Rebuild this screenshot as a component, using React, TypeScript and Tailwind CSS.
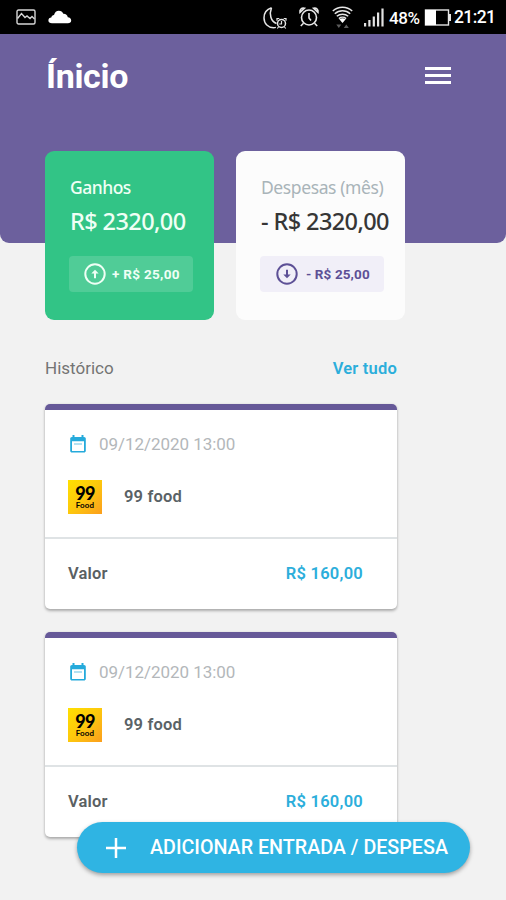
import type { FC, ReactNode } from "react"

type TEntry = {
  id: number
  date: string
  name: string
  value: string
}

const entries: TEntry[] = [
  { id: 1, date: "09/12/2020 13:00", name: "99 food", value: "R$ 160,00" },
  { id: 2, date: "09/12/2020 13:00", name: "99 food", value: "R$ 160,00" },
]

const StatusBar: FC = () => {
  return (
    <div className="flex h-[34px] items-center justify-between bg-black pr-[11px] pl-4 text-white">
      <div className="flex items-center gap-[12px]">
        <svg width="20" height="16" viewBox="0 0 20 16" fill="none" stroke="#d6d6d6" strokeWidth="1.4">
          <rect x="1" y="1" width="18" height="14" rx="1.5" />
          <path d="M1.500 9.500L5.500 4.500l3.500 4 2-1.500 3 2.500 2-2 2.500 2.500" />
        </svg>
        <svg width="24" height="14" viewBox="0 0 24 14" fill="#fff">
          <path d="M4 13.200C1.800 13.200.4 12.100.4 10.400c0-1.600 1.200-2.600 2.900-2.800C3.600 5.700 4.600 4.900 6 4.900 6.800 2.400 8.400.8 10.800.8c2.300 0 3.700 1.100 4.500 3 2.500-.1 4.100 1.200 4.500 3.500 2.100.2 3.400 1.300 3.400 3.100 0 1.800-1.300 2.800-3.300 2.800z" />
        </svg>
      </div>

      <div className="flex items-center">
        {/* Do not disturb with schedule */}
        <svg className="mt-px" width="25" height="24" viewBox="0 0 25 24" fill="none" stroke="#e6e6e6" strokeWidth="1.500">
          <path d="M8.500 1.800C3.800 3.300 1 7 1 12c0 5.600 4.200 9.700 9.700 9.700.8 0 1.500-.1 2.200-.3M8.500 1.800C6 8.200 7.700 15.500 13.500 17.500" />
          <circle cx="18.500" cy="17.500" r="4" />
          <path d="M18.500 15v3h-2.300M14 14.800v-2.300h2.300M23 14.800v-2.300h-2.300M15.500 21l-1.200 1.500M21.500 21l1.200 1.500" strokeWidth="1.200" />
        </svg>

        {/* Alarm */}
        <svg className="ml-[10px]" width="22" height="22" viewBox="0 0 22 22" fill="none" stroke="#e6e6e6" strokeWidth="1.600">
          <circle cx="11" cy="11.500" r="7.500" />
          <path d="M11 7v5l2 2.500M2 6.500C1.500 3.500 3.500 1.500 6.500 2.200zM20 6.500C20.500 3.500 18.500 1.500 15.500 2.200zM5.500 17.200L2.800 20M16.500 17.200l2.700 2.800" />
        </svg>

        {/* Wifi */}
        <svg className="ml-[12px]" width="21" height="22" viewBox="0 0 21 22" fill="none" stroke="#e6e6e6" strokeWidth="1.500">
          <path d="M.8 5C6.200 0 14.800 0 20.200 5M2.800 7.700c4.400-4 11-4 15.400 0M4.800 10.300c3.200-2.900 8.200-2.900 11.400 0M6.900 12.600c2-1.700 5.200-1.700 7.200 0" />
          <path d="M7.300 13.300c2-1.300 4.400-1.300 6.400 0L10.500 17z" fill="#fff" stroke="none" />
          <path d="M4.300 18.500h5L6.800 22zM11.800 22h5L14.300 18.500z" fill="#5c5c5c" stroke="none" />
        </svg>

        {/* Signal */}
        <svg className="ml-[11px]" width="21" height="19" viewBox="0 0 21 19" fill="#e2e2e2">
          <rect x="0" y="15" width="2.200" height="3.500" />
          <rect x="4.300" y="12" width="2.200" height="6.500" />
          <rect x="8.700" y="8.500" width="2.200" height="10" />
          <rect x="13" y="4.500" width="2.200" height="14" />
          <rect x="17.400" y="0.500" width="2.200" height="18" />
        </svg>

        <span className="ml-[4px] w-[34px] pt-[2px] text-[17px] leading-none font-medium tracking-[-0.4px] whitespace-nowrap">48%</span>

        {/* Battery */}
        <svg className="ml-[1px]" width="27" height="17" viewBox="0 0 27 17">
          <rect x="1.500" y="1" width="23" height="15" fill="none" stroke="#e6e6e6" strokeWidth="1.400" />
          <rect x="1" y="1" width="11" height="15" fill="#fff" />
          <rect x="25" y="5" width="2" height="7" fill="#e6e6e6" />
        </svg>

        <span className="ml-[3px] w-[41px] pt-[2px] text-[17.500px] leading-none font-medium tracking-[-0.6px] whitespace-nowrap">21:21</span>
      </div>
    </div>
  )
}

const Header: FC = () => {
  return (
    <header className="flex h-[209px] items-start justify-between rounded-b-[9px] bg-[#6c609d] pr-[55px] pl-[46px]">
      <h1 className="mt-[20px] text-[34px] leading-[44px] font-bold tracking-[-0.3px] text-white">Ínicio</h1>
      <button className="mt-[33px] flex w-[26px] flex-col gap-[4px]" aria-label="Menu">
        <span className="h-[3px] bg-white" />
        <span className="h-[3px] bg-white" />
        <span className="h-[3px] bg-white" />
      </button>
    </header>
  )
}

type TSummaryCard = {
  title: string
  value: string
  delta: string
  icon: ReactNode
  className: string
  titleClass: string
  badgeClass: string
}

const SummaryCard: FC<TSummaryCard> = ({ title, value, delta, icon, className, titleClass, badgeClass }) => {
  return (
    <div className={`h-[169px] w-[169px] rounded-[9px] pt-[24px] pl-[24px] ${className}`}>
      <p className={`pl-px font-['Noto_Sans',sans-serif] text-[17.500px] leading-[24px] whitespace-nowrap ${titleClass}`}>{title}</p>
      <p className="mt-[6px] pl-px font-['Noto_Sans',sans-serif] text-[23.500px] leading-[32px] font-medium tracking-[-0.6px] whitespace-nowrap">
        {value}
      </p>
      <div className={`mt-[19px] flex h-[36px] w-[124px] items-center rounded-[4px] text-[13.500px] font-bold whitespace-nowrap ${badgeClass}`}>
        {icon}
        {delta}
      </div>
    </div>
  )
}

const ArrowUp: FC = () => (
  <svg className="mr-[6px]" width="22" height="22" viewBox="0 0 22 22" fill="none" stroke="currentColor" strokeWidth="2">
    <circle cx="11" cy="11" r="9.700" />
    <path d="M11 15.200V9" />
    <path d="M7.300 10.500L11 6.800l3.700 3.700z" fill="currentColor" stroke="none" />
  </svg>
)

const ArrowDown: FC = () => (
  <svg className="mr-[8px]" width="22" height="22" viewBox="0 0 22 22" fill="none" stroke="currentColor" strokeWidth="2">
    <circle cx="11" cy="11" r="9.700" />
    <path d="M11 6.800V13" />
    <path d="M7.300 11.500l3.700 3.700 3.700-3.700z" fill="currentColor" stroke="none" />
  </svg>
)

const CalendarIcon: FC = () => (
  <svg width="16" height="18" viewBox="0 0 16 18" fill="#25aadb">
    <path d="M2.500 0h2v2h7V0h2v2H14c1.100 0 1.800.8 1.800 1.800v12c0 1.100-.8 1.800-1.800 1.800H2C.9 17.600.2 16.800.2 15.800v-12C.2 2.800.9 2 2 2h.5zM2 6.200v9.700h12V6.200z" />
    <rect x="4" y="8" width="8" height="2" opacity=".35" />
  </svg>
)

const FoodLogo: FC = () => (
  <div className="flex h-[34px] w-[34px] flex-col items-center bg-linear-to-br from-[#ffe000] via-[#fdc80c] to-[#fb9e1c] pt-[5px] text-black">
    <span className="font-['Lato',sans-serif] text-[18px] leading-[16px] font-black tracking-[-0.6px]">99</span>
    <span className="font-['Lato',sans-serif] text-[8px] leading-[8px] font-bold tracking-[0.2px]">Food</span>
  </div>
)

const EntryCard: FC<{ entry: TEntry }> = ({ entry }) => {
  return (
    <div className="h-[205px] overflow-hidden rounded-[5px] bg-white shadow-[0_2px_3px_rgba(0,0,0,0.28),0_0_3px_rgba(0,0,0,0.08)]">
      <div className="h-[6px] bg-[#665998]" />
      <div className="h-[129px] border-b-2 border-[#dfe3e5] px-[23px] pt-[22px]">
        <div className="flex items-center gap-[13px] pl-[2px]">
          <CalendarIcon />
          <span className="text-[17px] leading-[24px] tracking-[-0.05px] whitespace-nowrap text-[#b3b7ba]">{entry.date}</span>
        </div>
        <div className="mt-[24px] flex items-center">
          <FoodLogo />
          <span className="ml-[22px] text-[16.500px] font-semibold tracking-[0.15px] text-[#5a6266]">{entry.name}</span>
        </div>
      </div>
      <div className="flex h-[71px] items-center justify-between pr-[34px] pl-[23px] text-[16.500px] font-semibold">
        <span className="tracking-[0.15px] text-[#5a6062]">Valor</span>
        <span className="tracking-[0.25px] text-[#2caedb]">{entry.value}</span>
      </div>
    </div>
  )
}

const App: FC = () => {
  return (
    <div className="relative h-[900px] w-[506px] overflow-hidden bg-[#f2f2f2] font-['Roboto',sans-serif]">
      <StatusBar />
      <Header />

      {/* Summary cards overlap the header */}
      <div className="relative -mt-[92px] flex gap-[22px] pl-[45px]">
        <SummaryCard
          title="Ganhos"
          value="R$ 2320,00"
          delta="+ R$ 25,00"
          icon={<ArrowUp />}
          className="bg-[#32c486] text-[#effff5]"
          titleClass="font-medium tracking-[-0.5px]"
          badgeClass="bg-[#50cc97] pl-[15px] tracking-[0.3px]"
        />
        <SummaryCard
          title="Despesas (mês)"
          value="- R$ 2320,00"
          delta="- R$ 25,00"
          icon={<ArrowDown />}
          className="bg-[#fcfcfc] text-[#363636]"
          titleClass="tracking-[-0.4px] text-[#a9b4b9]"
          badgeClass="bg-[#f1eff8] pl-[16px] tracking-[0.1px] text-[#5d5096]"
        />
      </div>

      <div className="mt-[36px] ml-[45px] w-[352px]">
        <div className="flex h-[26px] items-center justify-between">
          <span className="text-[17px] text-[#747474]">Histórico</span>
          <a href="#" className="text-[16.500px] font-semibold tracking-[0.2px] text-[#2caedb]">
            Ver tudo
          </a>
        </div>
        <div className="mt-[22px] flex flex-col gap-[23px]">
          {entries.map((entry) => (
            <EntryCard key={entry.id} entry={entry} />
          ))}
        </div>
      </div>

      {/* Floating action button */}
      <button className="absolute top-[822px] left-[77px] flex h-[51px] w-[393px] items-center rounded-full bg-[#2fb4e3] pl-[29px] text-white shadow-[0_2px_4px_rgba(0,0,0,0.35)]">
        <svg width="20" height="20" viewBox="0 0 20 20" stroke="currentColor" strokeWidth="2.500">
          <path d="M10 0v20M0 10h20" />
        </svg>
        <span className="ml-[24px] text-[19.700px] font-medium whitespace-nowrap">ADICIONAR ENTRADA / DESPESA</span>
      </button>
    </div>
  )
}

export default App
